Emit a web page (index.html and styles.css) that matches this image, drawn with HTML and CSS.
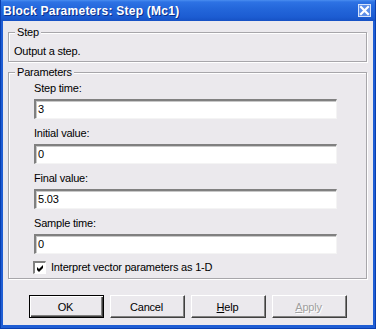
FILE: index.html
```html
<!DOCTYPE html>
<html>
<head>
<meta charset="utf-8">
<link rel="stylesheet" href="styles.css">
</head>
<body>
<div class="window">
  <div class="titlebar">
    <span class="title">Block Parameters: Step (Mc1)</span>
    <span class="close"><svg width="11" height="11" viewBox="0 0 11 11"><path d="M2 2 L9 9 M9 2 L2 9" stroke="#fff" stroke-width="2.2" stroke-linecap="square"/></svg></span>
  </div>
  <div class="body">
    <fieldset class="group step">
      <legend>Step</legend>
      <div class="desc">Output a step.</div>
    </fieldset>
    <fieldset class="group params">
      <legend>Parameters</legend>
      <div class="field">
        <div class="label">Step time:</div>
        <div class="input">3</div>
      </div>
      <div class="field">
        <div class="label">Initial value:</div>
        <div class="input">0</div>
      </div>
      <div class="field">
        <div class="label">Final value:</div>
        <div class="input">5.03</div>
      </div>
      <div class="field">
        <div class="label">Sample time:</div>
        <div class="input">0</div>
      </div>
      <div class="check">
        <span class="box"><svg width="9" height="9" viewBox="0 0 9 9"><path d="M1 3 L3 5 L7 1 L7 4 L3 8 L1 6 Z" fill="#000"/></svg></span>
        <span>Interpret vector parameters as 1-D</span>
      </div>
    </fieldset>
    <div class="buttons">
      <div class="btn default"><span class="face">OK</span></div>
      <div class="btn"><span class="face">Cancel</span></div>
      <div class="btn"><span class="face"><u>H</u>elp</span></div>
      <div class="btn disabled"><span class="face"><u>A</u>pply</span></div>
    </div>
  </div>
</div>
</body>
</html>
```
FILE: styles.css
```css
html, body {
  margin: 0;
  padding: 0;
}
body {
  width: 376px;
  height: 329px;
  overflow: hidden;
  font-family: "Liberation Sans", Arial, sans-serif;
  font-size: 11px;
  letter-spacing: -0.2px;
  color: #000;
}
.window {
  width: 376px;
  height: 329px;
  box-sizing: border-box;
  display: flex;
  flex-direction: column;
  background: #1f5ed4;
  border: 1px solid #0a3fb0;
  border-top: none;
}
.titlebar {
  height: 21px;
  flex: none;
  display: flex;
  align-items: center;
  justify-content: space-between;
  padding: 0 4px 0 2px;
  background: linear-gradient(#4a8df0 0, #2d72e4 2px, #2366da 9px, #1c5cd2 17px, #1651c4 21px);
}
.title {
  color: #fff;
  font-weight: bold;
  font-size: 12px;
  letter-spacing: 0.25px;
  text-shadow: 1px 1px 0 #0b2f8a;
}
.close {
  width: 11px;
  height: 11px;
  display: flex;
  align-items: center;
  justify-content: center;
  background: #5c8ee8;
  border: 1px solid #d6e2fa;
  margin-top: -1px;
}
.body {
  flex: 1;
  margin: 0 2px 3px 2px;
  background: #ebe9ed;
  padding: 5px 6px 0 5px;
  display: flex;
  flex-direction: column;
}
.group {
  margin: 0;
  border: 1px solid #a7a6aa;
  box-shadow: 1px 1px 0 #fff, inset 1px 1px 0 #fff;
  padding: 0;
}
.group legend {
  padding: 0 2px;
  line-height: 13px;
  background: #ebe9ed;
}
.step {
  padding: 6px 5px 3px 5px;
}
.step legend {
  margin-left: 1px;
}
.desc {
  line-height: 13px;
}
.params {
  margin-top: 4px;
  padding: 2px 29px 4px 25px;
}
.params legend {
  margin-left: -19px;
}
.field {
  display: flex;
  flex-direction: column;
  margin-bottom: 7px;
}
.label {
  line-height: 14px;
  margin-bottom: 4px;
}
.input {
  height: 20px;
  box-sizing: border-box;
  background: #fff;
  border-style: solid;
  border-width: 2px 1px 1px 2px;
  border-color: #808080 #f4f4f4 #f4f4f4 #808080;
  box-shadow: inset 1px 1px 0 #c8c8c8;
  padding: 0 2px;
  line-height: 17px;
}
.check {
  display: flex;
  align-items: center;
  gap: 5px;
  margin-top: 4px;
  margin-left: -1px;
  line-height: 13px;
}
.box {
  width: 13px;
  height: 13px;
  box-sizing: border-box;
  background: #fff;
  border-style: solid;
  border-width: 2px 1px 1px 2px;
  border-color: #808080 #fff #fff #808080;
  display: flex;
  align-items: center;
  justify-content: center;
}
.buttons {
  display: flex;
  justify-content: center;
  gap: 6px;
  margin-top: 16px;
}
.btn {
  width: 75px;
  height: 23px;
  box-sizing: border-box;
  border-style: solid;
  border-width: 1px;
  border-color: #fff #404040 #404040 #fff;
  display: flex;
}
.btn .face {
  flex: 1;
  display: flex;
  align-items: center;
  justify-content: center;
  border-style: solid;
  border-width: 0 1px 1px 0;
  border-color: #808080;
  padding-top: 1px;
}
.btn.default {
  border: 1px solid #000;
  box-shadow: inset 1px 1px 0 #fff, inset -1px -1px 0 #404040;
  padding: 1px;
}
.btn.default .face {
  border-width: 0 1px 1px 0;
}
.btn.disabled .face {
  color: #a0a0a0;
  text-shadow: 1px 1px 0 #fff;
}
```
